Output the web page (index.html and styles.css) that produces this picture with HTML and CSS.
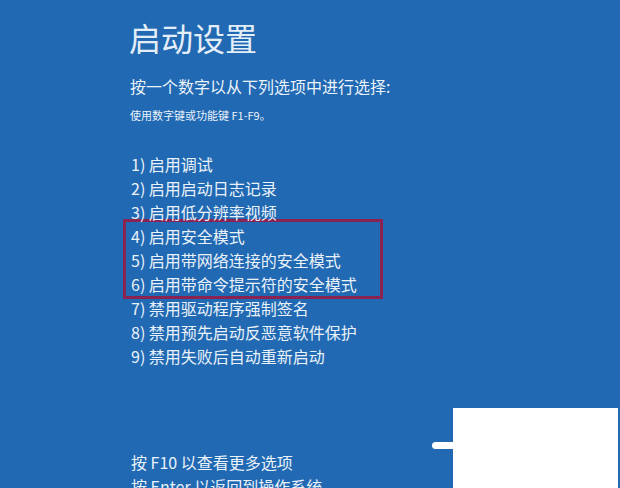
FILE: index.html
```html
<!DOCTYPE html>
<html lang="zh-CN">
<head>
<meta charset="utf-8">
<title>启动设置</title>
<link rel="stylesheet" href="styles.css">
</head>
<body>
<main class="screen">
  <h1 class="title">启动设置</h1>
  <p class="subtitle">按一个数字以从下列选项中进行选择:</p>
  <p class="note">使用数字键或功能键 F1-F9。</p>
  <ul class="options">
    <li>1) 启用调试</li>
    <li>2) 启用启动日志记录</li>
    <li>3) 启用低分辨率视频</li>
    <li class="group">
      <ul class="highlight">
        <li>4) 启用安全模式</li>
        <li>5) 启用带网络连接的安全模式</li>
        <li>6) 启用带命令提示符的安全模式</li>
      </ul>
    </li>
    <li>7) 禁用驱动程序强制签名</li>
    <li>8) 禁用预先启动反恶意软件保护</li>
    <li>9) 禁用失败后自动重新启动</li>
  </ul>
  <ul class="footer">
    <li>按 F10 以查看更多选项</li>
    <li>按 Enter 以返回到操作系统</li>
  </ul>
  <div class="cover"><span class="cover-tab"></span></div>
</main>
</body>
</html>
```
FILE: styles.css
```css
html, body {
  margin: 0;
  padding: 0;
  height: 100%;
  overflow: hidden;
}
body {
  background: #2169b2;
  color: #eaf2fa;
  font-family: "Noto Sans CJK SC", "Noto Sans", "Liberation Sans", sans-serif;
}
.screen {
  position: relative;
  height: 488px;
  padding: 17px 0 0 129px;
  box-sizing: border-box;
}
.title {
  margin: 0;
  font-size: 32px;
  line-height: 40px;
  font-weight: 400;
  color: #e4eef8;
}
.subtitle {
  margin: 19px 0 0 1px;
  font-size: 16px;
  line-height: 20px;
}
.note {
  margin: 12px 0 0 1px;
  font-size: 11px;
  line-height: 14px;
}
.options,
.footer,
.highlight {
  list-style: none;
  margin: 0;
  padding: 0;
}
.options {
  margin: 30px 0 0 2px;
  font-size: 16px;
  line-height: 24px;
}
.highlight {
  width: 260px;
  box-sizing: border-box;
  border: 3px solid #8a2252;
  margin: -5px 0 -3px -8px;
  padding: 2px 0 0 5px;
}
.footer {
  margin: 82px 0 0 2px;
  font-size: 16px;
  line-height: 24px;
}
.cover {
  position: absolute;
  left: 453px;
  top: 408px;
  width: 165px;
  height: 80px;
  background: #ffffff;
}
.cover-tab {
  position: absolute;
  left: -21px;
  top: 34px;
  width: 24px;
  height: 7px;
  background: #ffffff;
  border-radius: 4px 0 0 4px;
}
```
